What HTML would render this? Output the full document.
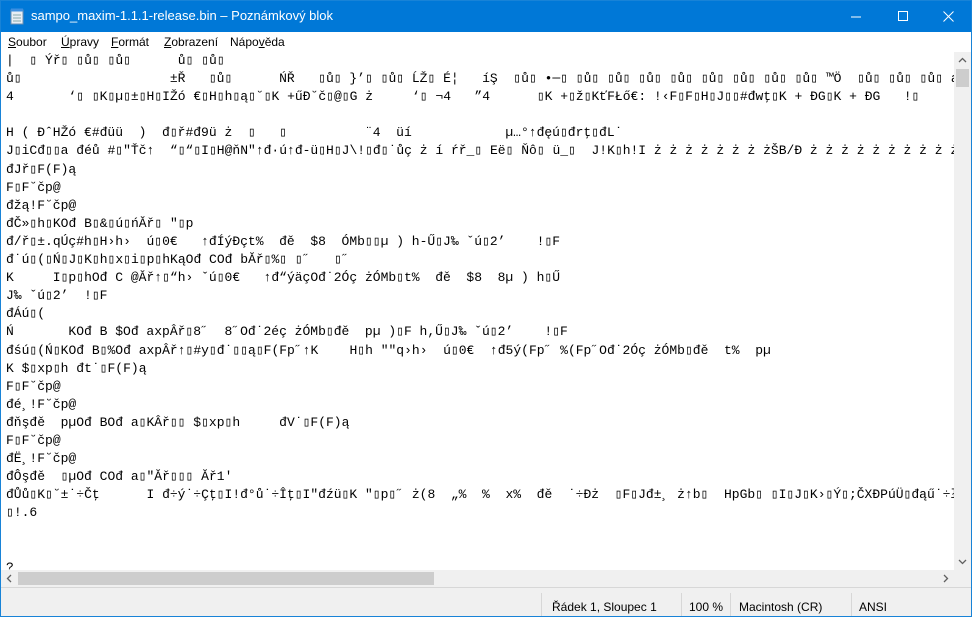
<!DOCTYPE html>
<html><head><meta charset="utf-8"><style>
body{margin:0;width:972px;height:617px;overflow:hidden;background:#fff;font-family:"Liberation Sans",sans-serif;}
.win{position:absolute;left:0;top:0;width:970px;height:615px;border:1px solid #1883d7;overflow:hidden;}
.title{position:absolute;left:0;top:0;width:970px;height:31px;background:#0078d7;color:#fff;font-size:13px;}
.title .t{position:absolute;left:30px;top:7px;}
.menu{position:absolute;left:0;top:31px;width:970px;height:20px;background:#fff;font-size:12px;}
.menu span{position:absolute;top:3px;}
.text{position:absolute;left:5px;top:51px;width:948px;height:518px;overflow:hidden;font-family:"Liberation Mono",monospace;font-size:13px;line-height:18.1px;white-space:pre;color:#000;padding-top:0px}
.vs{position:absolute;left:953px;top:51px;width:17px;height:518px;background:#f0f0f0;}
.hs{position:absolute;left:0;top:569px;width:953px;height:17px;background:#f0f0f0;}
.corner{position:absolute;left:953px;top:569px;width:17px;height:17px;background:#f0f0f0;}
.status{position:absolute;left:0;top:586px;width:970px;height:29px;background:#f0f0f0;border-top:1px solid #d7d7d7;font-size:12px;}
.status span{position:absolute;top:12px;}
.sep{position:absolute;top:5px;width:1px;height:24px;background:#d7d7d7;}
</style></head><body><div class="win">
<div class="title">
<svg style="position:absolute;left:8px;top:7px" width="16" height="17"><rect x="2" y="2" width="12" height="14" fill="#e8eef5" stroke="#6d8fb0"/><rect x="2" y="0.5" width="12" height="3" fill="#3d8fe0"/><line x1="4" y1="7" x2="12" y2="7" stroke="#8aa"/><line x1="4" y1="10" x2="12" y2="10" stroke="#8aa"/><line x1="4" y1="13" x2="12" y2="13" stroke="#8aa"/></svg>
<span class="t">sampo_maxim-1.1.1-release.bin – Poznámkový blok</span>
<svg style="position:absolute;left:850px;top:10px" width="12" height="12"><line x1="0" y1="6" x2="10" y2="6" stroke="#fff"/></svg>
<svg style="position:absolute;left:897px;top:10px" width="12" height="12"><rect x="0.5" y="0.5" width="9" height="9" fill="none" stroke="#fff"/></svg>
<svg style="position:absolute;left:942px;top:10px" width="12" height="12"><path d="M0.5 0.5L10.5 10.5M10.5 0.5L0.5 10.5" stroke="#fff"/></svg>
</div>
<div class="menu"><span style="left:7px"><u>S</u>oubor</span><span style="left:60px"><u>Ú</u>pravy</span><span style="left:110px"><u>F</u>ormát</span><span style="left:163px"><u>Z</u>obrazení</span><span style="left:229px">Nápo<u>v</u>ěda</span></div>
<div class="text">|  ▯ Ýř▯ ▯ů▯ ▯ů▯      ů▯ ▯ů▯
ů▯                   ±Ř   ▯ů▯      ŃŘ   ▯ů▯ }’▯ ▯ů▯ ĹŽ▯ É¦   íŞ  ▯ů▯ •─▯ ▯ů▯ ▯ů▯ ▯ů▯ ▯ů▯ ▯ů▯ ▯ů▯ ▯ů▯ ▯ů▯ ™Ö  ▯ů▯ ▯ů▯ ▯ů▯ áŰ  ▯ů▯ ▯ů▯
4       ‘▯ ▯K▯µ▯±▯H▯IŽó €▯H▯h▯ą▯˘▯K +űĐ˘č▯@▯G ż     ‘▯ ¬4   ”4      ▯K +▯ž▯KťFŁő€: !‹F▯F▯H▯J▯▯#đwţ▯K + ĐG▯K + ĐG   !▯

H ( ĐˆHŽó €#đüü  )  đ▯ř#đ9ü ż  ▯   ▯          ¨4  üí            µ…°↑đęú▯đrţ▯đL˙
J▯iCđ▯▯a đéů #▯"Ťč↑  “▯“▯I▯H@ňN"↑đ·ú↑đ-ü▯H▯J\!▯đ▯˙ůç ż í ŕř_▯ Eë▯ Ňô▯ ü_▯  J!K▯h!I ż ż ż ż ż ż ż żŠB/Đ ż ż ż ż ż ż ż ż ż ż ż :
đJř▯F(F)ą
F▯F˘čp@
đžą!F˘čp@
đČ»▯h▯KOđ B▯&▯ú▯ńĂř▯ "▯p
đ/ř▯±.qÚç#h▯H›h›  ú▯0€   ↑đÍýĐçt%  đě  $8  ÓMb▯▯µ ) h-Ű▯J‰ ˇú▯2’    !▯F
đ˙ú▯(▯Ń▯J▯K▯h▯x▯i▯p▯hKąOđ COđ bĂř▯%▯ ▯˝   ▯˝
K     I▯p▯hOđ C @Ăř↑▯“h› ˇú▯0€   ↑đ“ýäçOđ˙2Óç żÓMb▯t%  đě  $8  8µ ) h▯Ű
J‰ ˇú▯2’  !▯F
đÁú▯(
Ń       KOđ B $Ođ axpÂř▯8˝  8˝Ođ˙2éç żÓMb▯đě  pµ )▯F h,Ű▯J‰ ˇú▯2’    !▯F
đśú▯(Ń▯KOđ B▯%Ođ axpÂř↑▯#y▯đ˙▯▯ą▯F(Fp˝↑K    H▯h ""q›h›  ú▯0€  ↑đ5ý(Fp˝ %(Fp˝Ođ˙2Óç żÓMb▯đě  t%  pµ
K $▯xp▯h đt˙▯F(F)ą
F▯F˘čp@
đé¸!F˘čp@
đňşđě  pµOđ BOđ a▯KÂř▯▯ $▯xp▯h     đV˙▯F(F)ą
F▯F˘čp@
đË¸!F˘čp@
đÔşđě  ▯µOđ COđ a▯"Ăř▯▯▯ Ăř1'
đŮů▯K▯˘±˙÷Čţ      I đ÷ý˙÷Çţ▯I!đ°ů˙÷Îţ▯I"đźü▯K "▯p▯˝ ż(8  „%  %  x%  đě  ˙÷Đż  ▯F▯Jđ±¸ ż↑b▯  HpGb▯ ▯I▯J▯K›▯Ý▯;ČXĐPúÜ▯đąű˙÷łý  Đ’
▯!.6


?</div>
<div class="vs"><svg style="position:absolute;left:4px;top:5px" width="9" height="6"><path d="M1 5L4.5 1.5L8 5" stroke="#606060" fill="none" stroke-width="1.3"/></svg><div style="position:absolute;left:2px;top:17px;width:13px;height:18px;background:#cdcdcd"></div><svg style="position:absolute;left:4px;top:507px" width="9" height="6"><path d="M1 1L4.5 4.5L8 1" stroke="#606060" fill="none" stroke-width="1.3"/></svg></div>
<div class="hs"><svg style="position:absolute;left:5px;top:4px" width="6" height="9"><path d="M5 1L1.5 4.5L5 8" stroke="#606060" fill="none" stroke-width="1.3"/></svg><div style="position:absolute;left:17px;top:2px;width:416px;height:13px;background:#cdcdcd"></div><svg style="position:absolute;left:942px;top:4px" width="6" height="9"><path d="M1 1L4.5 4.5L1 8" stroke="#606060" fill="none" stroke-width="1.3"/></svg></div>
<div class="corner"></div>
<div class="status"><div class="sep" style="left:540px"></div><span style="left:551px">Řádek 1, Sloupec 1</span><div class="sep" style="left:680px"></div><span style="left:688px">100 %</span><div class="sep" style="left:729px"></div><span style="left:738px">Macintosh (CR)</span><div class="sep" style="left:850px"></div><span style="left:858px">ANSI</span></div>
</div></body></html>
